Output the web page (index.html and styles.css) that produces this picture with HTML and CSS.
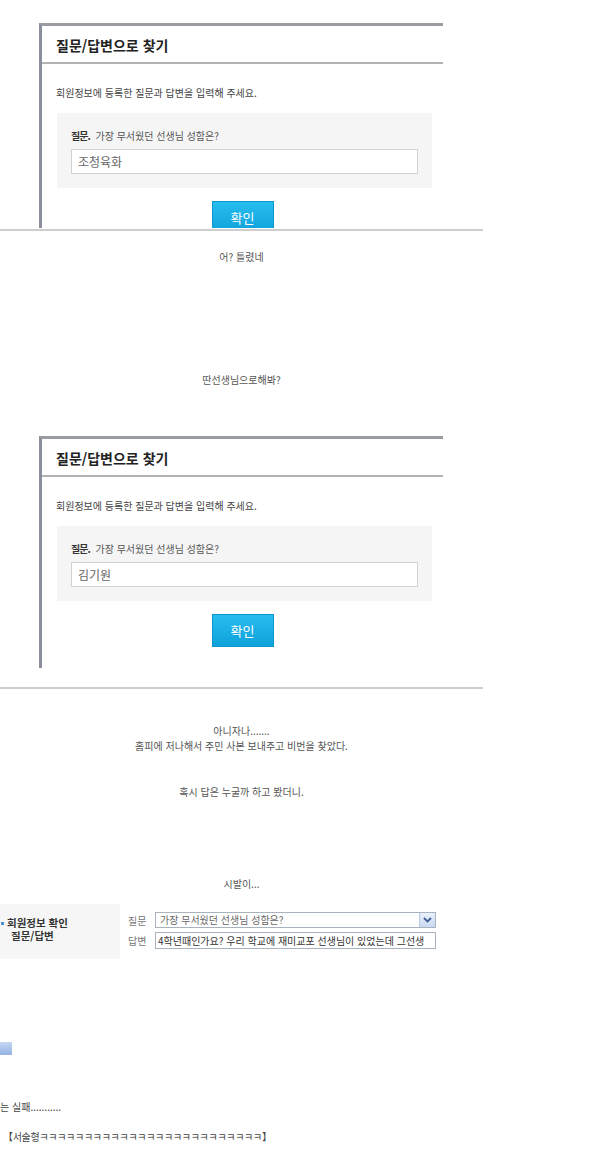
FILE: index.html
```html
<!DOCTYPE html>
<html lang="ko">
<head>
    <meta charset="UTF-8">
    <meta name="viewport" content="width=device-width, initial-scale=1.0">
    <title>질문/답변으로 찾기</title>
    <link rel="stylesheet" href="styles.css">
</head>
<body>
    <div class="page">
        <!-- first capture: cut off under the button -->
        <div class="find-panel find-panel-cut">
            <h2 class="find-title">질문/답변으로 찾기</h2>
            <p class="find-guide">회원정보에 등록한 질문과 답변을 입력해 주세요.</p>
            <div class="find-box">
                <p class="find-question"><strong>질문.</strong> 가장 무서웠던 선생님 성함은?</p>
                <div class="find-input">조청육화</div>
            </div>
            <div class="find-actions"><button class="btn-ok">확인</button></div>
        </div>
        <div class="cut-line"></div>

        <p class="note note-wrong">어? 틀렸네</p>
        <p class="note note-other">딴선생님으로해봐?</p>

        <!-- second capture -->
        <div class="find-panel find-panel-full">
            <h2 class="find-title">질문/답변으로 찾기</h2>
            <p class="find-guide">회원정보에 등록한 질문과 답변을 입력해 주세요.</p>
            <div class="find-box">
                <p class="find-question"><strong>질문.</strong> 가장 무서웠던 선생님 성함은?</p>
                <div class="find-input">김기원</div>
            </div>
            <div class="find-actions"><button class="btn-ok">확인</button></div>
        </div>
        <div class="cut-line cut-line-second"></div>

        <p class="note note-story">아니자나.......<br>홈피에 저나해서 주민 사본 보내주고 비번을 찾았다.</p>
        <p class="note note-check">혹시 답은 누굴까 하고 봤더니.</p>
        <p class="note note-swear">시발이...</p>

        <!-- account info capture -->
        <div class="info-row">
            <div class="info-head">
                <span class="info-bullet"></span>
                <div class="info-head-text">
                    <div>회원정보 확인</div>
                    <div class="info-sub">질문/답변</div>
                </div>
            </div>
            <div class="info-body">
                <div class="info-line">
                    <span class="info-label">질문</span>
                    <div class="info-select">
                        <span class="info-value">가장 무서웠던 선생님 성함은?</span>
                        <span class="info-arrow">
                            <svg width="9" height="6" viewBox="0 0 9 6"><path d="M1 1 L4.5 4.5 L8 1" fill="none" stroke="#3f5f97" stroke-width="1.8"/></svg>
                        </span>
                    </div>
                </div>
                <div class="info-line">
                    <span class="info-label">답변</span>
                    <div class="info-field">4학년때인가요? 우리 학교에 재미교포 선생님이 있었는데 그선생</div>
                </div>
            </div>
        </div>

        <div class="btn-scrap"></div>

        <p class="tail tail-fail">는 실패...........</p>
        <p class="tail tail-laugh">【서술형ㅋㅋㅋㅋㅋㅋㅋㅋㅋㅋㅋㅋㅋㅋㅋㅋㅋㅋㅋㅋㅋㅋㅋㅋㅋ】</p>
    </div>
</body>
</html>
```

FILE: styles.css
```css
body {
    margin: 0;
    background-color: #ffffff;
    font-family: "Noto Sans CJK KR", "Noto Sans", sans-serif;
    color: #555;
}
p {
    margin: 0;
}
.page {
    width: 600px;
    padding-top: 23px;
}

/* find panel */
.find-panel {
    box-sizing: border-box;
    width: 404px;
    margin-left: 39px;
    border-top: 3px solid #9a9ca4;
    border-left: 3px solid #8b8f9b;
    overflow: hidden;
}
.find-panel-cut {
    height: 205px;
}
.find-panel-full {
    height: 232px;
    margin-top: 48px;
}
.find-title {
    margin: 0;
    height: 33px;
    padding: 3px 0 0 14px;
    line-height: 33px;
    font-size: 14px;
    font-weight: bold;
    color: #222;
    border-bottom: 2px solid #b3b3b3;
}
.find-guide {
    margin: 21px 0 0 14px;
    font-size: 10px;
    line-height: 16px;
    color: #444;
}
.find-box {
    margin: 12px 11px 0 15px;
    height: 75px;
    box-sizing: border-box;
    padding: 15px 14px 0 14px;
    background-color: #f5f5f5;
}
.find-question {
    font-size: 10px;
    line-height: 16px;
    color: #555;
}
.find-question strong {
    color: #333;
    letter-spacing: -1px;
    margin-right: 3px;
}
.find-input {
    margin-top: 5px;
    height: 25px;
    box-sizing: border-box;
    padding-left: 6px;
    line-height: 23px;
    font-size: 12px;
    color: #666;
    background-color: #fff;
    border: 1px solid #d2d2d2;
}
.find-actions {
    display: flex;
    justify-content: center;
    margin-top: 13px;
}
.btn-ok {
    width: 62px;
    height: 33px;
    padding: 0;
    font-family: inherit;
    font-size: 13px;
    color: #fff;
    background: linear-gradient(#27bdf0, #0ea2da);
    border: 1px solid #0f97cd;
}

.cut-line {
    width: 483px;
    height: 2px;
    margin-top: 1px;
    background-color: #cdcdcd;
}
.cut-line-second {
    margin-top: 19px;
}

/* chat notes between captures */
.note {
    width: 483px;
    text-align: center;
    font-size: 10px;
    line-height: 16px;
    color: #555;
}
.note-wrong {
    margin-top: 18px;
}
.note-other {
    margin-top: 107px;
}
.note-story {
    margin-top: 34px;
    line-height: 15px;
}
.note-check {
    margin-top: 31px;
    line-height: 15px;
}
.note-swear {
    margin-top: 77px;
    line-height: 15px;
}

/* account info row */
.info-row {
    display: flex;
    width: 440px;
    height: 55px;
    margin-top: 13px;
}
.info-head {
    display: flex;
    align-items: center;
    width: 120px;
    padding-bottom: 5px;
    box-sizing: border-box;
    background-color: #f6f6f6;
}
.info-bullet {
    width: 3px;
    height: 3px;
    margin: 0 3px 12px 1px;
    background-color: #4a8fd6;
}
.info-head-text {
    font-size: 10.5px;
    line-height: 13px;
    font-weight: bold;
    color: #333;
}
.info-sub {
    padding-left: 4px;
}
.info-body {
    display: flex;
    flex-direction: column;
    gap: 4px;
    padding: 8px 0 0 8px;
}
.info-line {
    display: flex;
    align-items: center;
}
.info-label {
    width: 27px;
    font-size: 10px;
    color: #777;
}
.info-select,
.info-field {
    box-sizing: border-box;
    width: 281px;
    font-size: 10px;
    white-space: nowrap;
    overflow: hidden;
    border: 1px solid #a9b2bf;
}
.info-select {
    display: flex;
    justify-content: space-between;
    height: 16px;
    line-height: 14px;
    color: #666;
}
.info-value {
    padding-left: 4px;
}
.info-arrow {
    display: flex;
    align-items: center;
    justify-content: center;
    width: 15px;
    background: linear-gradient(#eaf1fb, #c8d9f2);
    border-left: 1px solid #b7c8e2;
}
.info-field {
    height: 17px;
    line-height: 15px;
    padding-left: 2px;
    color: #333;
}

.btn-scrap {
    width: 12px;
    height: 13px;
    margin-top: 83px;
    background: linear-gradient(#c6d7f2, #93b2e3);
}

.tail {
    font-size: 10px;
    line-height: 16px;
    color: #444;
}
.tail-fail {
    margin-top: 44px;
}
.tail-laugh {
    margin-top: 14px;
    padding-left: 3px;
    letter-spacing: -0.3px;
}
```
